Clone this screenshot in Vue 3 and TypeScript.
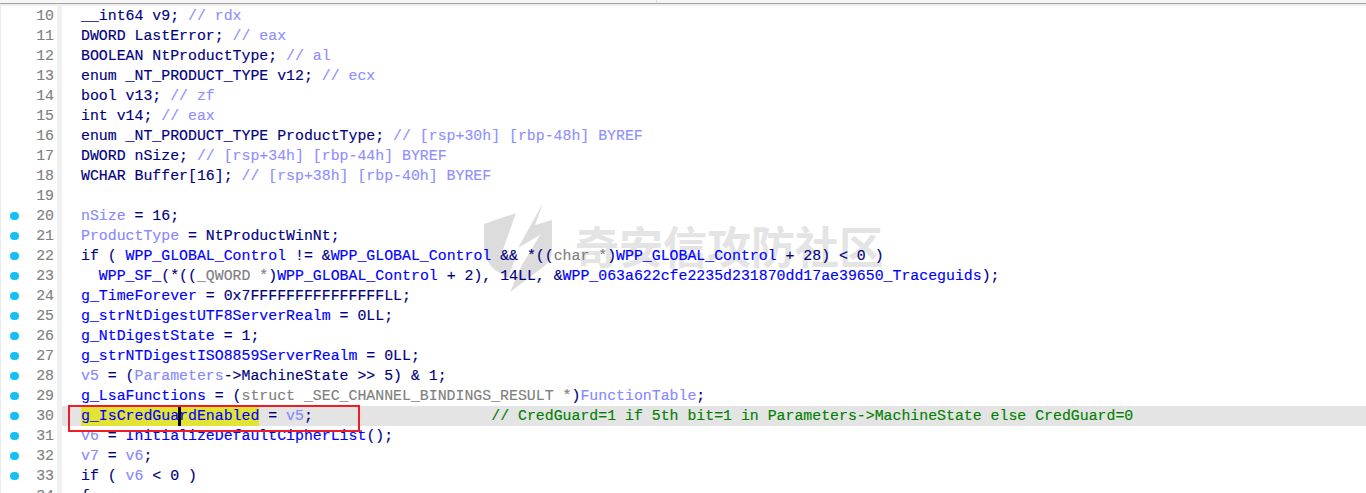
<script setup lang="ts">
type Seg = [string, string]
interface Line { no: number; dot: boolean; segs: Seg[]; current?: boolean }

const n = (t: string): Seg => ['n', t]
const g = (t: string): Seg => ['g', t]
const l = (t: string): Seg => ['l', t]
const c = (t: string): Seg => ['c', t]
const t = (s: string): Seg => ['t', s]

const raw: [boolean, Seg[]][] = [
  [false, [n('__int64 v9; '), c('// rdx')]],
  [false, [n('DWORD LastError; '), c('// eax')]],
  [false, [n('BOOLEAN NtProductType; '), c('// al')]],
  [false, [n('enum _NT_PRODUCT_TYPE v12; '), c('// ecx')]],
  [false, [n('bool v13; '), c('// zf')]],
  [false, [n('int v14; '), c('// eax')]],
  [false, [n('enum _NT_PRODUCT_TYPE ProductType; '), c('// [rsp+30h] [rbp-48h] BYREF')]],
  [false, [n('DWORD nSize; '), c('// [rsp+34h] [rbp-44h] BYREF')]],
  [false, [n('WCHAR Buffer[16]; '), c('// [rsp+38h] [rbp-40h] BYREF')]],
  [false, []],
  [true, [l('nSize'), n(' = 16;')]],
  [true, [l('ProductType'), n(' = NtProductWinNt;')]],
  [true, [n('if ( '), g('WPP_GLOBAL_Control'), n(' != &'), g('WPP_GLOBAL_Control'), n(' && *(('), t('char *'), n(')'), g('WPP_GLOBAL_Control'), n(' + 28) < 0 )')]],
  [true, [n('  '), g('WPP_SF_'), n('(*(('), t('_QWORD *'), n(')'), g('WPP_GLOBAL_Control'), n(' + 2), 14LL, &'), g('WPP_063a622cfe2235d231870dd17ae39650_Traceguids'), n(');')]],
  [true, [g('g_TimeForever'), n(' = 0x7FFFFFFFFFFFFFFFLL;')]],
  [true, [g('g_strNtDigestUTF8ServerRealm'), n(' = 0LL;')]],
  [true, [g('g_NtDigestState'), n(' = 1;')]],
  [true, [g('g_strNTDigestISO8859ServerRealm'), n(' = 0LL;')]],
  [true, [l('v5'), n(' = ('), l('Parameters'), n('->MachineState >> 5) & 1;')]],
  [true, [g('g_LsaFunctions'), n(' = ('), t('struct _SEC_CHANNEL_BINDINGS_RESULT *'), n(')'), l('FunctionTable'), n(';')]],
  [true, [['h', 'g_IsCredGuardEnabled'], n(' = '), l('v5'), n(';'), n('                    '), ['k', '// CredGuard=1 if 5th bit=1 in Parameters->MachineState else CredGuard=0']]],
  [true, [l('v6'), n(' = '), g('InitializeDefaultCipherList'), n('();')]],
  [true, [l('v7'), n(' = '), l('v6'), n(';')]],
  [true, [n('if ( '), l('v6'), n(' < 0 )')]],
  [false, [n('{')]],
]

const lines: Line[] = raw.map(([dot, segs], i) => ({
  no: i + 10,
  dot,
  segs,
  current: i + 10 === 30,
}))
</script>

<template>
  <div class="editor">
    <div class="top">
      <div class="top-tabs"><span class="tab-a"></span><span class="tab-b"></span></div>
      <div class="top-rule"></div>
      <div class="top-shade"></div>
    </div>
    <div class="body">
      <div class="gutter">
        <div v-for="line in lines" :key="line.no" class="gutter-row">
          <span class="dot-slot"><i v-if="line.dot" class="dot"></i></span>
          <span class="num">{{ line.no }}</span>
        </div>
      </div>
      <div class="strip"></div>
      <div class="code">
        <svg class="mark" viewBox="0 0 90 100" aria-hidden="true">
          <path d="M4 24 L36 13 L21 55 L35 59 L28 78 L15 70 Q4 61 4 44 Z" />
          <path d="M63 3 L55 25 L72 20 L72 50 Q72 60 62 68 L30 92 L42 65 L60 35 L38 48 Z" />
        </svg>
        <div class="brand">奇安信攻防社区</div>
        <div v-for="line in lines" :key="line.no" class="row" :class="{ current: line.current }">
          <span v-for="(seg, i) in line.segs" :key="i" :class="seg[0]">{{ seg[1] }}</span>
        </div>
        <span class="caret"></span>
        <span class="box"></span>
      </div>
    </div>
  </div>
</template>

<style scoped>
.editor {
  width: 1366px;
  height: 493px;
  overflow: hidden;
  background: #fff;
  display: flex;
  flex-direction: column;
  font-family: "Liberation Mono", "DejaVu Sans Mono", monospace;
  font-size: 14.87px;
  -webkit-text-stroke: 0.15px;
}
.top { height: 6px; flex: none; display: flex; flex-direction: column; }
.top-tabs { height: 3px; display: flex; background: #f6f6f6; }
.tab-a { width: 656px; border-right: 1px solid #dcdcdc; }
.tab-b { flex: 1; }
.top-rule { height: 1px; background: #a4a4a4; }
.top-shade { height: 2px; background: #eeeeee; }
.body { flex: 1; display: flex; min-height: 0; }
.gutter { width: 57px; flex: none; box-sizing: border-box; border-left: 1px solid #ececec; }
.gutter-row { height: 20px; display: flex; align-items: center; color: #808080; }
.dot-slot { width: 17px; padding-left: 9px; box-sizing: border-box; display: flex; }
.dot { width: 8.5px; height: 8.5px; flex: none; border-radius: 50%; background: #16c0f4; display: block; }
.num { width: 36px; text-align: right; line-height: 20px; }
.strip { width: 5px; flex: none; background: #f0f0f0; }
.code { flex: 1; position: relative; min-width: 0; }
.row {
  height: 20px;
  line-height: 20px;
  padding-left: 19px;
  white-space: pre;
  position: relative;
}
.row.current { background: #e4e4e4; }
.n { color: #000080; }
.g { color: #0000ff; }
.l { color: #8888ff; }
.c { color: #8f8fff; }
.t { color: #808080; }
.k { color: #008000; }
.h { color: #0000ff; background: #e3e336; display: inline-block; height: 20px; }
.mark {
  position: absolute;
  left: 418px;
  top: 194px;
  width: 90px;
  height: 100px;
  fill: #dcdcdc;
}
.brand {
  position: absolute;
  left: 513px;
  top: 214px;
  font-family: "Noto Sans CJK SC", sans-serif;
  font-size: 44px;
  line-height: 50px;
  font-weight: 700;
  -webkit-text-stroke: 0;
  color: #e4e4e4;
  white-space: nowrap;
}
.caret {
  position: absolute;
  left: 116px;
  top: 400px;
  width: 3px;
  height: 20px;
  background: #000;
}
.box {
  position: absolute;
  left: 6px;
  top: 399px;
  width: 292px;
  height: 27px;
  box-sizing: border-box;
  border: 2px solid #ee1c25;
}
</style>
